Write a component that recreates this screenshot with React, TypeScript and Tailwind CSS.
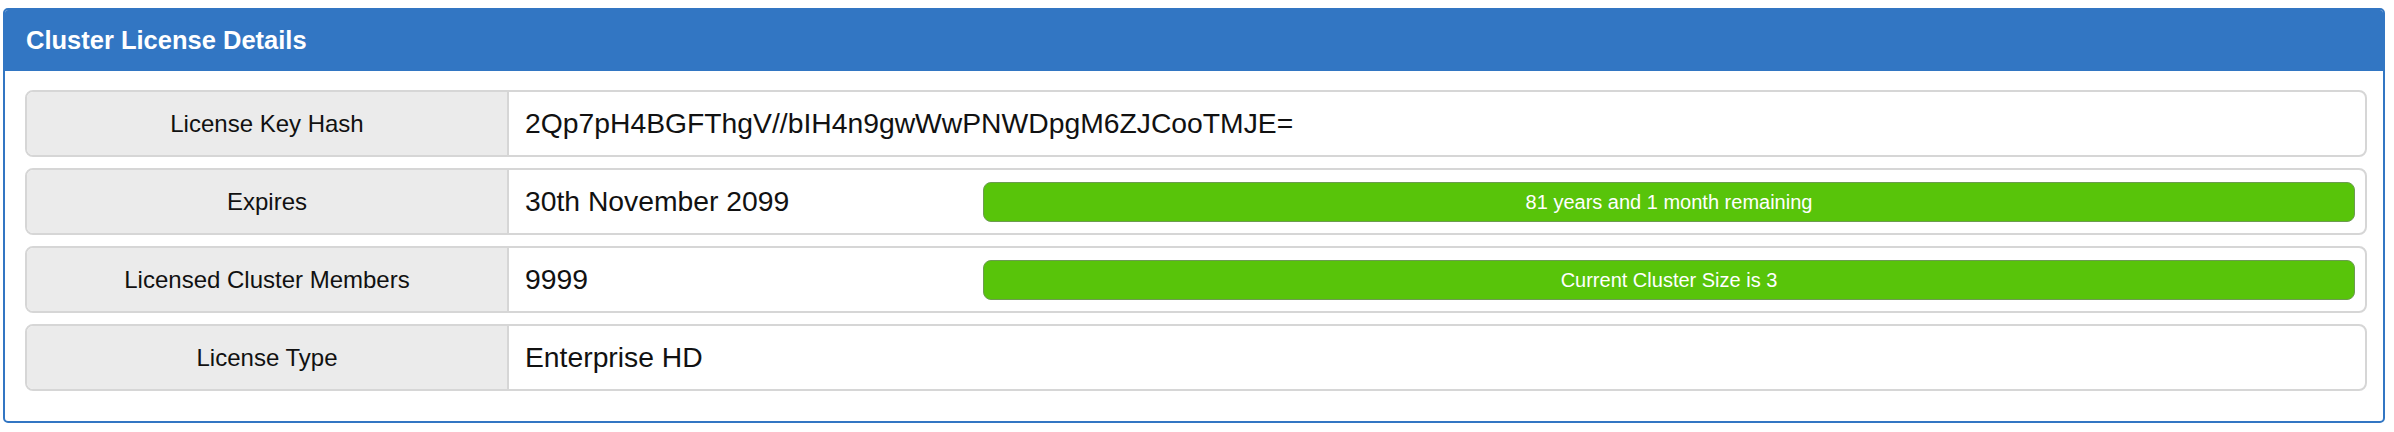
import React from 'react';

type Row = {
  label: string;
  value: string;
  bar?: string;
};

const rows: Row[] = [
  { label: 'License Key Hash', value: '2Qp7pH4BGFThgV//bIH4n9gwWwPNWDpgM6ZJCooTMJE=' },
  { label: 'Expires', value: '30th November 2099', bar: '81 years and 1 month remaining' },
  { label: 'Licensed Cluster Members', value: '9999', bar: 'Current Cluster Size is 3' },
  { label: 'License Type', value: 'Enterprise HD' },
];

export default function App() {
  return (
    <div className="h-[432px] w-[2394px] bg-white pl-[3px] pr-[9px] pt-[8px] font-['Liberation_Sans',Arial,sans-serif] text-[#111]">
      <div className="h-[415px] overflow-hidden rounded-[5px] border-2 border-[#3276c3]">
        {/* header */}
        <div className="flex h-[61px] items-center bg-[#3276c3] pl-[21px]">
          <span className="text-[25.5px] font-bold text-white">Cluster License Details</span>
        </div>

        <div className="flex flex-col gap-[11px] pl-[20px] pr-[16px] pt-[19px]">
          {rows.map((r) => (
            <div
              key={r.label}
              className="flex h-[67px] overflow-hidden rounded-[8px] border-2 border-[#d6d6d6]"
            >
              <div className="flex w-[482px] shrink-0 items-center justify-center border-r-2 border-[#d6d6d6] bg-[#ebebeb] text-[24px]">
                {r.label}
              </div>
              <div className="flex flex-1 items-center">
                <div className="w-[474px] shrink-0 whitespace-nowrap pl-[16px] text-[28.3px]">
                  {r.value}
                </div>
                {r.bar && (
                  <div className="mr-[10px] flex h-[40px] flex-1 items-center justify-center rounded-[8px] border border-[#6c9c50] bg-[#58c40a] text-[20px] text-white">
                    {r.bar}
                  </div>
                )}
              </div>
            </div>
          ))}
        </div>
      </div>
    </div>
  );
}
